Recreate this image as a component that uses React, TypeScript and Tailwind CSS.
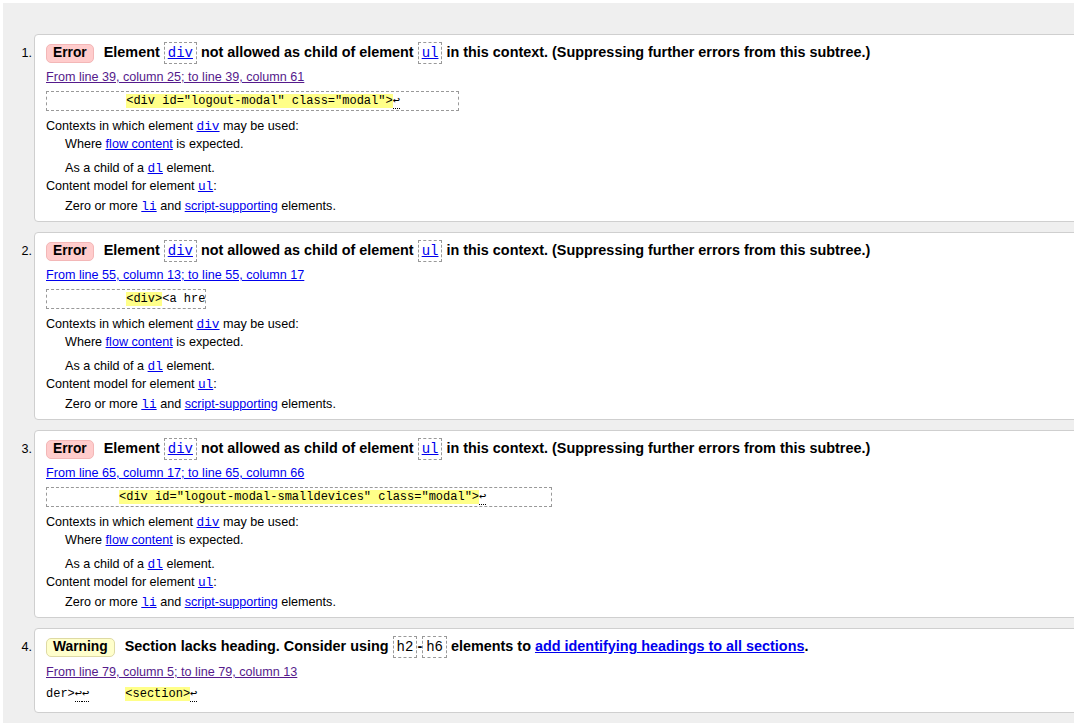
import React from "react";

const sans = "font-['Liberation_Sans',Arial,Helvetica,sans-serif]";
const mono = "font-['Liberation_Mono','DejaVu_Sans_Mono',monospace]";
const blue = "text-[#0000ee] underline";
const purple = "text-[#551a8b] underline";

function CodeLink({ children }: { children: string }) {
  return (
    <code className={`${mono} text-[12.8px] leading-none ${blue}`}>{children}</code>
  );
}

function HeadCode({ children, link = true }: { children: string; link?: boolean }) {
  return (
    <code
      className={`${mono} inline-block border border-dashed border-[#999] px-[3px] leading-[20px] text-[14px] font-normal align-middle ${
        link ? blue : "text-black"
      }`}
    >
      {children}
    </code>
  );
}

function Ret() {
  return <span className="border-b border-dotted border-black leading-[12px]">↩</span>;
}

function Badge({ kind }: { kind: "Error" | "Warning" }) {
  return (
    <strong
      className={`inline-flex items-center h-[19px] px-[6px] rounded-[5px] border mr-[10px] text-[13.8px] ${
        kind === "Error"
          ? "bg-[#ffcccc] border-[#f3b7b7]"
          : "bg-[#ffffcc] border-[#dedaa4]"
      }`}
    >
      {kind}
    </strong>
  );
}

type ErrorItem = {
  from: string;
  visited: boolean;
  indent: string;
  code: string;
  ret: boolean;
  tail: string;
};

const errors: ErrorItem[] = [
  {
    from: "From line 39, column 25; to line 39, column 61",
    visited: true,
    indent: "           ",
    code: '<div id="logout-modal" class="modal">',
    ret: true,
    tail: "        ",
  },
  {
    from: "From line 55, column 13; to line 55, column 17",
    visited: false,
    indent: "           ",
    code: "<div>",
    ret: false,
    tail: "<a hre",
  },
  {
    from: "From line 65, column 17; to line 65, column 66",
    visited: false,
    indent: "          ",
    code: '<div id="logout-modal-smalldevices" class="modal">',
    ret: true,
    tail: "         ",
  },
];

function Card({ n, last = false, children }: { n: number; last?: boolean; children: React.ReactNode }) {
  return (
    <div className="flex">
      <div className="w-[31px] shrink-0 text-right pr-[2px] pt-[9px] leading-[20px] text-[12.6px]">
        {n}.
      </div>
      <div
        className={`flex-1 -mr-[12px] bg-white border border-[#cfcfcf] rounded-[4px] pl-[11px] pt-[8px] ${
          last ? "pb-[9px]" : "pb-[6px]"
        }`}
      >
        {children}
      </div>
    </div>
  );
}

function ErrorCard({ n, e }: { n: number; e: ErrorItem }) {
  return (
    <Card n={n}>
      <div className="flex items-center h-[20px] text-[14.4px] font-bold whitespace-nowrap">
        <Badge kind="Error" />
        <span>
          Element <HeadCode>div</HeadCode> not allowed as child of element{" "}
          <HeadCode>ul</HeadCode> in this context. (Suppressing further errors from this
          subtree.)
        </span>
      </div>
      <div className="mt-[5px] leading-[18px] text-[12.6px]">
        <a className={e.visited ? purple : blue}>{e.from}</a>
      </div>
      <div className="mt-[5px] flex">
        <code
          className={`${mono} block border border-dashed border-[#999] leading-[18px] text-[12px] whitespace-pre`}
        >
          {e.indent}
          <span className="bg-[#ffff88]">{e.code}</span>
          {e.ret && <Ret />}
          {e.tail}
        </code>
      </div>
      <dl className="mt-[6px] text-[12.6px] leading-[18px]">
        <dt>
          Contexts in which element <CodeLink>div</CodeLink> may be used:
        </dt>
        <dd className="pl-[19px]">
          Where <a className={blue}>flow content</a> is expected.
        </dd>
        <dd className="pl-[19px] mt-[6px]">
          As a child of a <CodeLink>dl</CodeLink> element.
        </dd>
        <dt>
          Content model for element <CodeLink>ul</CodeLink>:
        </dt>
        <dd className="pl-[19px] mt-[2px]">
          Zero or more <CodeLink>li</CodeLink> and{" "}
          <a className={blue}>script-supporting</a> elements.
        </dd>
      </dl>
    </Card>
  );
}

export default function App() {
  return (
    <div className={`${sans} min-h-screen bg-white pt-[3px] pl-[3px] text-black overflow-hidden`}>
      <div className="min-h-[720px] bg-[#efefef] pt-[31px] pb-[11px] flex flex-col gap-[10px]">
        {errors.map((e, i) => (
          <ErrorCard key={i} n={i + 1} e={e} />
        ))}
        <Card n={4} last>
          <div className="flex items-center h-[20px] text-[14.4px] font-bold whitespace-nowrap">
            <Badge kind="Warning" />
            <span>
              Section lacks heading. Consider using <HeadCode link={false}>h2</HeadCode>
              -<HeadCode link={false}>h6</HeadCode> elements to{" "}
              <a className={blue}>add identifying headings to all sections</a>.
            </span>
          </div>
          <div className="mt-[6px] leading-[18px] text-[12.6px]">
            <a className={purple}>From line 79, column 5; to line 79, column 13</a>
          </div>
          <div className="mt-[4px] flex">
            <code className={`${mono} block leading-[18px] text-[12px] whitespace-pre`}>
              der&gt;
              <Ret />
              <Ret />
              {"     "}
              <span className="bg-[#ffff88]">&lt;section&gt;</span>
              <Ret />
            </code>
          </div>
        </Card>
      </div>
    </div>
  );
}
